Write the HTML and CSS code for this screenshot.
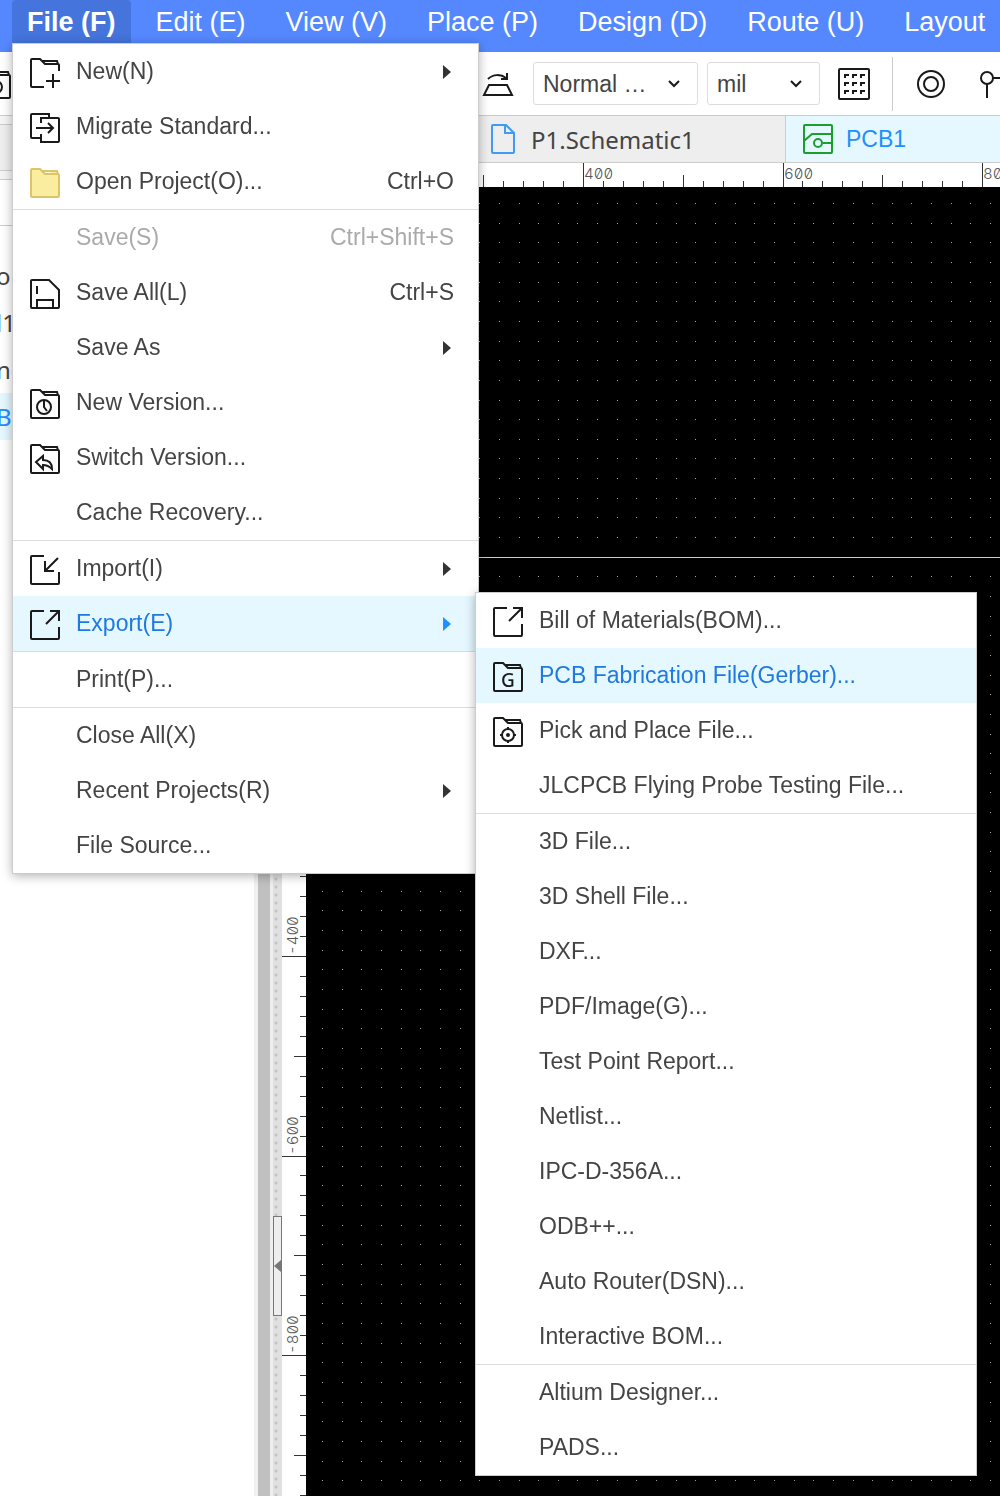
FILE: index.html
```html
<!DOCTYPE html>
<html lang="en">
<head>
  <meta charset="UTF-8" />
  <meta name="viewport" content="width=device-width, initial-scale=1" />
  <title>PCB Editor</title>
  <link rel="stylesheet" href="styles.css">
</head>
<body>
  <!-- Icon set -->
  <svg class="sprite" aria-hidden="true">
    <symbol id="i-folder" viewBox="0 0 30 30"><path d="M1 28V2q0-1 1-1h8l5 5h13q1 0 1 1v21q0 1-1 1H2q-1 0-1-1M12 3h15l1 3"/></symbol>
    <symbol id="i-new" viewBox="0 0 30 30"><path d="M14 29H2q-1 0-1-1V2q0-1 1-1h8l5 5h13q1 0 1 1v6M12 3h15l1 3M23 16v14M16 23h14"/></symbol>
    <symbol id="i-migrate" viewBox="0 0 30 30"><path d="M11 10V5h17q1 0 1 1v22q0 1-1 1H11v-8M11 25H2q-1 0-1-1V2q0-1 1-1h17v4M6 15h17M18 10l5 5-5 5"/></symbol>
    <symbol id="i-save" viewBox="0 0 30 30"><path d="M2 1h17l10 10v17q0 1-1 1H2q-1 0-1-1V2q0-1 1-1zM7 7v8M7 29v-8h16v8"/></symbol>
    <symbol id="i-clock" viewBox="0 0 30 30"><use href="#i-folder"/><circle cx="14" cy="18" r="7"/><path d="M14 12v6l3 4"/></symbol>
    <symbol id="i-switch" viewBox="0 0 30 30"><use href="#i-folder"/><path d="M6 18l7-6v4c6 0 9 3 9 9-3-3-5-4-9-4v4z"/></symbol>
    <symbol id="i-import" viewBox="0 0 30 30"><path d="M14 1H2q-1 0-1 1v26q0 1 1 1h26q1 0 1-1V17M28 3L15 16M15 6v10h9"/></symbol>
    <symbol id="i-export" viewBox="0 0 30 30"><path d="M14 1H2q-1 0-1 1v26q0 1 1 1h26q1 0 1-1V17M16 14L29 1M20 1h9v10"/></symbol>
    <symbol id="i-gerber" viewBox="0 0 30 30"><use href="#i-folder"/><text x="8" y="25" class="icon-letter">G</text></symbol>
    <symbol id="i-place" viewBox="0 0 30 30"><use href="#i-folder"/><circle cx="15" cy="18" r="6"/><circle cx="15" cy="18" r="1"/><path d="M15 10v3M15 23v3M7 18h3M20 18h3"/></symbol>
    <symbol id="i-chevron" viewBox="0 0 12 8"><path d="M1 1l5 5 5-5"/></symbol>
    <symbol id="i-arrow" viewBox="0 0 8 14"><path class="solid" d="M0 0l8 7-8 7z"/></symbol>
  </svg>

  <div class="app">
    <nav class="menubar">
      <div class="menubar-item">
        <button class="menubar-button open">File (F)</button>
        <ul class="menu">
          <li><button class="item"><svg class="icon"><use href="#i-new"/></svg>New(N)<svg class="arrow"><use href="#i-arrow"/></svg></button></li>
          <li><button class="item"><svg class="icon"><use href="#i-migrate"/></svg>Migrate Standard...</button></li>
          <li><button class="item"><svg class="icon yellow"><use href="#i-folder"/></svg>Open Project(O)...<kbd>Ctrl+O</kbd></button></li>
          <li class="group"><button class="item" disabled><span class="icon"></span>Save(S)<kbd>Ctrl+Shift+S</kbd></button></li>
          <li><button class="item"><svg class="icon"><use href="#i-save"/></svg>Save All(L)<kbd>Ctrl+S</kbd></button></li>
          <li><button class="item"><span class="icon"></span>Save As<svg class="arrow"><use href="#i-arrow"/></svg></button></li>
          <li><button class="item"><svg class="icon"><use href="#i-clock"/></svg>New Version...</button></li>
          <li><button class="item"><svg class="icon"><use href="#i-switch"/></svg>Switch Version...</button></li>
          <li><button class="item"><span class="icon"></span>Cache Recovery...</button></li>
          <li class="group"><button class="item"><svg class="icon"><use href="#i-import"/></svg>Import(I)<svg class="arrow"><use href="#i-arrow"/></svg></button></li>
          <li>
            <button class="item active"><svg class="icon"><use href="#i-export"/></svg>Export(E)<svg class="arrow"><use href="#i-arrow"/></svg></button>
            <ul class="menu submenu">
              <li><button class="item"><svg class="icon"><use href="#i-export"/></svg>Bill of Materials(BOM)...</button></li>
              <li><button class="item active"><svg class="icon"><use href="#i-gerber"/></svg>PCB Fabrication File(Gerber)...</button></li>
              <li><button class="item"><svg class="icon"><use href="#i-place"/></svg>Pick and Place File...</button></li>
              <li><button class="item"><span class="icon"></span>JLCPCB Flying Probe Testing File...</button></li>
              <li class="group"><button class="item"><span class="icon"></span>3D File...</button></li>
              <li><button class="item"><span class="icon"></span>3D Shell File...</button></li>
              <li><button class="item"><span class="icon"></span>DXF...</button></li>
              <li><button class="item"><span class="icon"></span>PDF/Image(G)...</button></li>
              <li><button class="item"><span class="icon"></span>Test Point Report...</button></li>
              <li><button class="item"><span class="icon"></span>Netlist...</button></li>
              <li><button class="item"><span class="icon"></span>IPC-D-356A...</button></li>
              <li><button class="item"><span class="icon"></span>ODB++...</button></li>
              <li><button class="item"><span class="icon"></span>Auto Router(DSN)...</button></li>
              <li><button class="item"><span class="icon"></span>Interactive BOM...</button></li>
              <li class="group"><button class="item"><span class="icon"></span>Altium Designer...</button></li>
              <li><button class="item"><span class="icon"></span>PADS...</button></li>
            </ul>
          </li>
          <li class="group"><button class="item"><span class="icon"></span>Print(P)...</button></li>
          <li class="group"><button class="item"><span class="icon"></span>Close All(X)</button></li>
          <li><button class="item"><span class="icon"></span>Recent Projects(R)<svg class="arrow"><use href="#i-arrow"/></svg></button></li>
          <li><button class="item"><span class="icon"></span>File Source...</button></li>
        </ul>
      </div>
      <button class="menubar-button">Edit (E)</button>
      <button class="menubar-button">View (V)</button>
      <button class="menubar-button">Place (P)</button>
      <button class="menubar-button">Design (D)</button>
      <button class="menubar-button">Route (U)</button>
      <button class="menubar-button">Layout</button>
    </nav>

    <div class="toolbar">
      <div class="toolbar-start">
        <button class="tool" aria-label="Preview"><svg width="11" height="30" viewBox="19 0 11 30"><use href="#i-folder" width="30" height="30"/><circle cx="15" cy="18" r="6"/></svg></button>
      </div>
      <button class="tool" aria-label="Flip board"><svg width="32" height="26" viewBox="0 0 32 26"><path d="M7 14h18l5 10H2zM6 8c5-5 13-5 18-1M25 2v6h-6"/></svg></button>
      <div class="picker picker-wide">
        <select aria-label="View mode"><option>Normal …</option></select>
        <svg class="chevron"><use href="#i-chevron"/></svg>
      </div>
      <div class="picker">
        <select aria-label="Unit"><option>mil</option></select>
        <svg class="chevron"><use href="#i-chevron"/></svg>
      </div>
      <button class="tool tool-grid" aria-label="Grid"><svg width="32" height="32" viewBox="0 0 32 32"><rect x="1" y="1" width="30" height="30" rx="1"/><path d="M7 10V7h4M15 10V7h4M23 10V7h4M7 18v-3h4M15 18v-3h4M23 18v-3h4M7 26v-3h4M15 26v-3h4M23 26v-3h4"/></svg></button>
      <div class="tool-divider"></div>
      <button class="tool" aria-label="Pad"><svg width="28" height="28" viewBox="0 0 28 28"><circle cx="14" cy="14" r="13"/><circle cx="14" cy="14" r="7"/></svg></button>
      <button class="tool tool-last" aria-label="Route"><svg width="30" height="28" viewBox="0 0 30 28"><circle cx="7" cy="8" r="6"/><path d="M13 8h17M7 14v14"/></svg></button>
    </div>

    <div class="main">
      <aside class="side">
        <div class="side-head"><div class="side-tab"></div></div>
        <div class="side-filter"></div>
        <ul class="tree">
          <li>o</li>
          <li>l1</li>
          <li>ne</li>
          <li class="selected">B</li>
        </ul>
      </aside>
      <div class="splitter"></div>
      <section class="workspace">
        <div class="tabs">
          <div class="tabs-start"></div>
          <button class="tab"><svg width="24" height="30" viewBox="0 0 24 30"><path d="M2 1h13l8 8v19q0 1-1 1H2q-1 0-1-1V2q0-1 1-1zM14 1v8h9"/></svg>P1.Schematic1</button>
          <button class="tab current"><svg width="30" height="30" viewBox="0 0 30 30"><rect x="1" y="1" width="28" height="28" rx="1"/><path d="M1 17l8-7h20M20 19h9"/><circle cx="15" cy="19" r="4"/></svg>PCB1</button>
        </div>
        <div class="editor">
          <div class="rail"><button class="rail-handle" aria-label="Collapse panel"></button></div>
          <div class="corner"></div>
          <svg class="ruler" id="ruler-x"></svg>
          <svg class="ruler" id="ruler-y"></svg>
          <div class="board" id="board"><canvas id="dots"></canvas></div>
        </div>
      </section>
    </div>
  </div>

  <script>
    // --- Board geometry: pixels from the top left corner of the board ---
    const ORIGIN_X = -122;
    const ORIGIN_Y = 370;
    const SCALE = 0.9975; // px per mil
    const TICK = 20;      // mil between two ticks
    const DOT_START = 16;
    const DOT_PITCH = 19.65;
    const SVG_NS = "http://www.w3.org/2000/svg";

    function addShape(parent, name, attrs) {
      const el = document.createElementNS(SVG_NS, name);
      for (const key in attrs) el.setAttribute(key, attrs[key]);
      parent.appendChild(el);
      return el;
    }

    function drawRuler(svg, length, origin, vertical) {
      svg.innerHTML = "";
      const first = Math.floor(-origin / SCALE / TICK);
      const last = Math.ceil((length - origin) / SCALE / TICK);
      for (let i = first; i <= last; i++) {
        const pos = Math.round(origin + i * TICK * SCALE);
        const size = i % 10 === 0 ? 24 : i % 5 === 0 ? 12 : 6;
        if (vertical) {
          addShape(svg, "rect", { x: 24 - size, y: pos, width: size, height: 1 });
        } else {
          addShape(svg, "rect", { x: pos, y: 24 - size, width: 1, height: size });
        }
        if (i % 10 === 0) {
          const text = vertical
            ? addShape(svg, "text", { transform: `translate(16 ${pos - 1}) rotate(-90)` })
            : addShape(svg, "text", { x: pos + 1, y: 16 });
          text.textContent = vertical ? -i * TICK : i * TICK;
        }
      }
    }

    function drawDots(canvas, width, height) {
      canvas.width = width;
      canvas.height = height;
      const ctx = canvas.getContext("2d");
      ctx.fillStyle = "#aaa";
      for (let y = DOT_START; y < height; y += DOT_PITCH)
        for (let x = DOT_START; x < width; x += DOT_PITCH)
          ctx.fillRect(Math.round(x), Math.round(y), 1, 1);
      // x axis
      ctx.fillStyle = "#ccc";
      ctx.fillRect(0, ORIGIN_Y, width, 1);
    }

    function drawBoard() {
      const board = document.getElementById("board");
      const w = board.clientWidth;
      const h = board.clientHeight;
      drawRuler(document.getElementById("ruler-x"), w, ORIGIN_X, false);
      drawRuler(document.getElementById("ruler-y"), h, ORIGIN_Y, true);
      drawDots(document.getElementById("dots"), w, h);
    }

    window.addEventListener("resize", drawBoard);
    drawBoard();
  </script>
</body>
</html>
```
FILE: styles.css
```css
* {
  box-sizing: border-box;
}
body {
  margin: 0;
  font-family: "Liberation Sans", Arial, sans-serif;
  font-size: 23px;
  color: #444;
  background: #fff;
}
button {
  font: inherit;
  color: inherit;
  background: none;
  border: none;
  padding: 0;
  cursor: pointer;
}
ul {
  list-style: none;
  margin: 0;
  padding: 0;
}
svg {
  display: block;
  flex: none;
  fill: none;
  stroke: #1a1a1a;
  stroke-width: 2;
}
.sprite {
  position: absolute;
  width: 0;
  height: 0;
}
.solid {
  fill: currentColor;
  stroke: none;
}
.icon-letter {
  font-family: "Noto Sans", sans-serif;
  font-size: 19px;
  font-weight: 500;
  fill: #1a1a1a;
  stroke: none;
}
.app {
  min-height: 100vh;
  display: flex;
  flex-direction: column;
  overflow: clip;
}

/* Menu bar */
.menubar {
  display: flex;
  align-items: flex-start;
  gap: 10px;
  height: 52px;
  padding-left: 12px;
  background: #5588ff;
  color: #fff;
  font-size: 27px;
}
.menubar-item {
  position: relative;
}
.menubar-button {
  flex: none;
  height: 43px;
  padding: 1px 15px 0;
  white-space: nowrap;
}
.menubar-button.open {
  background: #4474dc;
  border-radius: 4px 4px 0 0;
  font-weight: bold;
}

/* Menus */
.menu {
  position: absolute;
  z-index: 10;
  top: 100%;
  left: 0;
  width: 467px;
  background: #fff;
  border: 1px solid #ccc;
  box-shadow: 0 2px 10px rgba(0, 0, 0, 0.3);
  font-size: 23px;
  color: #444;
}
.menu li {
  position: relative;
}
.menu .group {
  border-top: 1px solid #dcdcdc;
}
.submenu {
  top: -4px;
  left: calc(100% - 3px);
  width: 502px;
}
.item {
  display: flex;
  align-items: center;
  width: 100%;
  height: 55px;
  padding: 0 24px 0 17px;
  white-space: nowrap;
}
.item:disabled {
  color: #aaa;
}
.item.active {
  background: #e5f7ff;
  color: #1e7ae0;
}
.icon {
  width: 30px;
  height: 30px;
  margin: 2px 16px 0 0;
}
.icon.yellow {
  fill: #faeda0;
  stroke: #dcc569;
}
.item kbd {
  margin-left: auto;
  font: inherit;
}
.arrow {
  width: 8px;
  height: 14px;
  margin: 0 3px 0 auto;
  color: #333;
}
.active .arrow {
  color: #1e90ff;
}

/* Toolbar */
.toolbar {
  display: flex;
  align-items: center;
  height: 64px;
  border-bottom: 1px solid #ccc;
}
.toolbar-start {
  flex: 0 0 482px;
  display: flex;
}
.tool {
  flex: none;
}
.picker {
  position: relative;
  flex: none;
  width: 113px;
  margin-left: 9px;
}
.picker-wide {
  width: 165px;
  margin-left: 19px;
}
.picker select {
  display: block;
  width: 100%;
  height: 43px;
  padding: 0 9px;
  appearance: none;
  border: 1px solid #ddd;
  border-radius: 3px;
  background: #fff;
  color: #444;
  font: inherit;
}
.chevron {
  position: absolute;
  top: 18px;
  right: 18px;
  width: 12px;
  height: 8px;
  pointer-events: none;
}
.tool-grid {
  margin: 0 22px 0 18px;
}
.tool-divider {
  flex: none;
  width: 1px;
  height: 54px;
  margin-right: 24px;
  background: #ccc;
}
.tool-last {
  margin-left: 35px;
}

/* Side panel */
.main {
  flex: 1;
  display: flex;
}
.side {
  flex: 0 0 254px;
  font-family: "Noto Sans", sans-serif;
  font-size: 24px;
}
.side-head {
  height: 64px;
  padding-top: 8px;
  background: #f5f5f5;
  border-bottom: 1px solid #ccc;
}
.side-tab {
  height: 47px;
  background: #eee;
  border: 1px solid #ccc;
  border-left: none;
}
.side-filter {
  height: 46px;
  border-bottom: 1px solid #ccc;
}
.tree {
  padding-top: 26px;
  text-indent: -4px;
}
.tree li {
  height: 47px;
  line-height: 47px;
}
.tree .selected {
  background: #e5f7ff;
  color: #1e90ff;
}
.splitter {
  flex: 0 0 16px;
  background: #c0c0c0;
  border-left: 4px solid #f0f0f0;
}

/* Document tabs */
.workspace {
  flex: 1;
  min-width: 0;
  display: flex;
  flex-direction: column;
}
.tabs {
  display: flex;
  height: 47px;
  background: #eee;
  border-bottom: 1px solid #ccc;
  overflow: hidden;
}
.tabs-start {
  flex: 0 0 200px;
}
.tab {
  flex: 0 0 316px;
  display: flex;
  align-items: center;
  gap: 16px;
  padding-left: 21px;
  border-right: 1px solid #ccc;
  font-family: "Noto Sans", sans-serif;
  font-size: 24px;
}
.tab svg {
  stroke: #3f9bf5;
}
.tab.current {
  flex: 1;
  gap: 13px;
  padding-left: 17px;
  border-right: none;
  background: #e5f7ff;
  color: #1e90ff;
  font-family: inherit;
  font-size: 23px;
}
.tab.current svg {
  stroke: #1a9e2c;
}

/* Board editor */
.editor {
  flex: 1;
  display: grid;
  grid-template-columns: 12px 24px minmax(0, 1fr);
  grid-template-rows: 24px minmax(0, 1fr);
}
.rail {
  grid-row: 1 / 3;
  position: relative;
  border-left: 3px solid #eee;
  background: radial-gradient(circle at 3px 4px, #c4c4c4 1px, #e0e0e0 2px) 0 0 / 9px 8px;
}
.rail-handle {
  position: absolute;
  top: 79%;
  left: 0;
  width: 9px;
  height: 100px;
  border: 1px solid #777;
  background: #eee;
}
.rail-handle::after {
  content: "";
  display: block;
  border: 6px solid transparent;
  border-left: none;
  border-right: 7px solid #777;
}
.ruler {
  width: 100%;
  height: 100%;
  fill: #333;
  stroke: none;
  overflow: hidden;
}
.ruler text {
  fill: #555;
  font-family: Inter, sans-serif;
  font-size: 15px;
  font-weight: 300;
  font-feature-settings: "zero", "tnum";
}
.board {
  position: relative;
  background: #000;
  overflow: hidden;
}
.board canvas {
  position: absolute;
  top: 0;
  left: 0;
}
```
